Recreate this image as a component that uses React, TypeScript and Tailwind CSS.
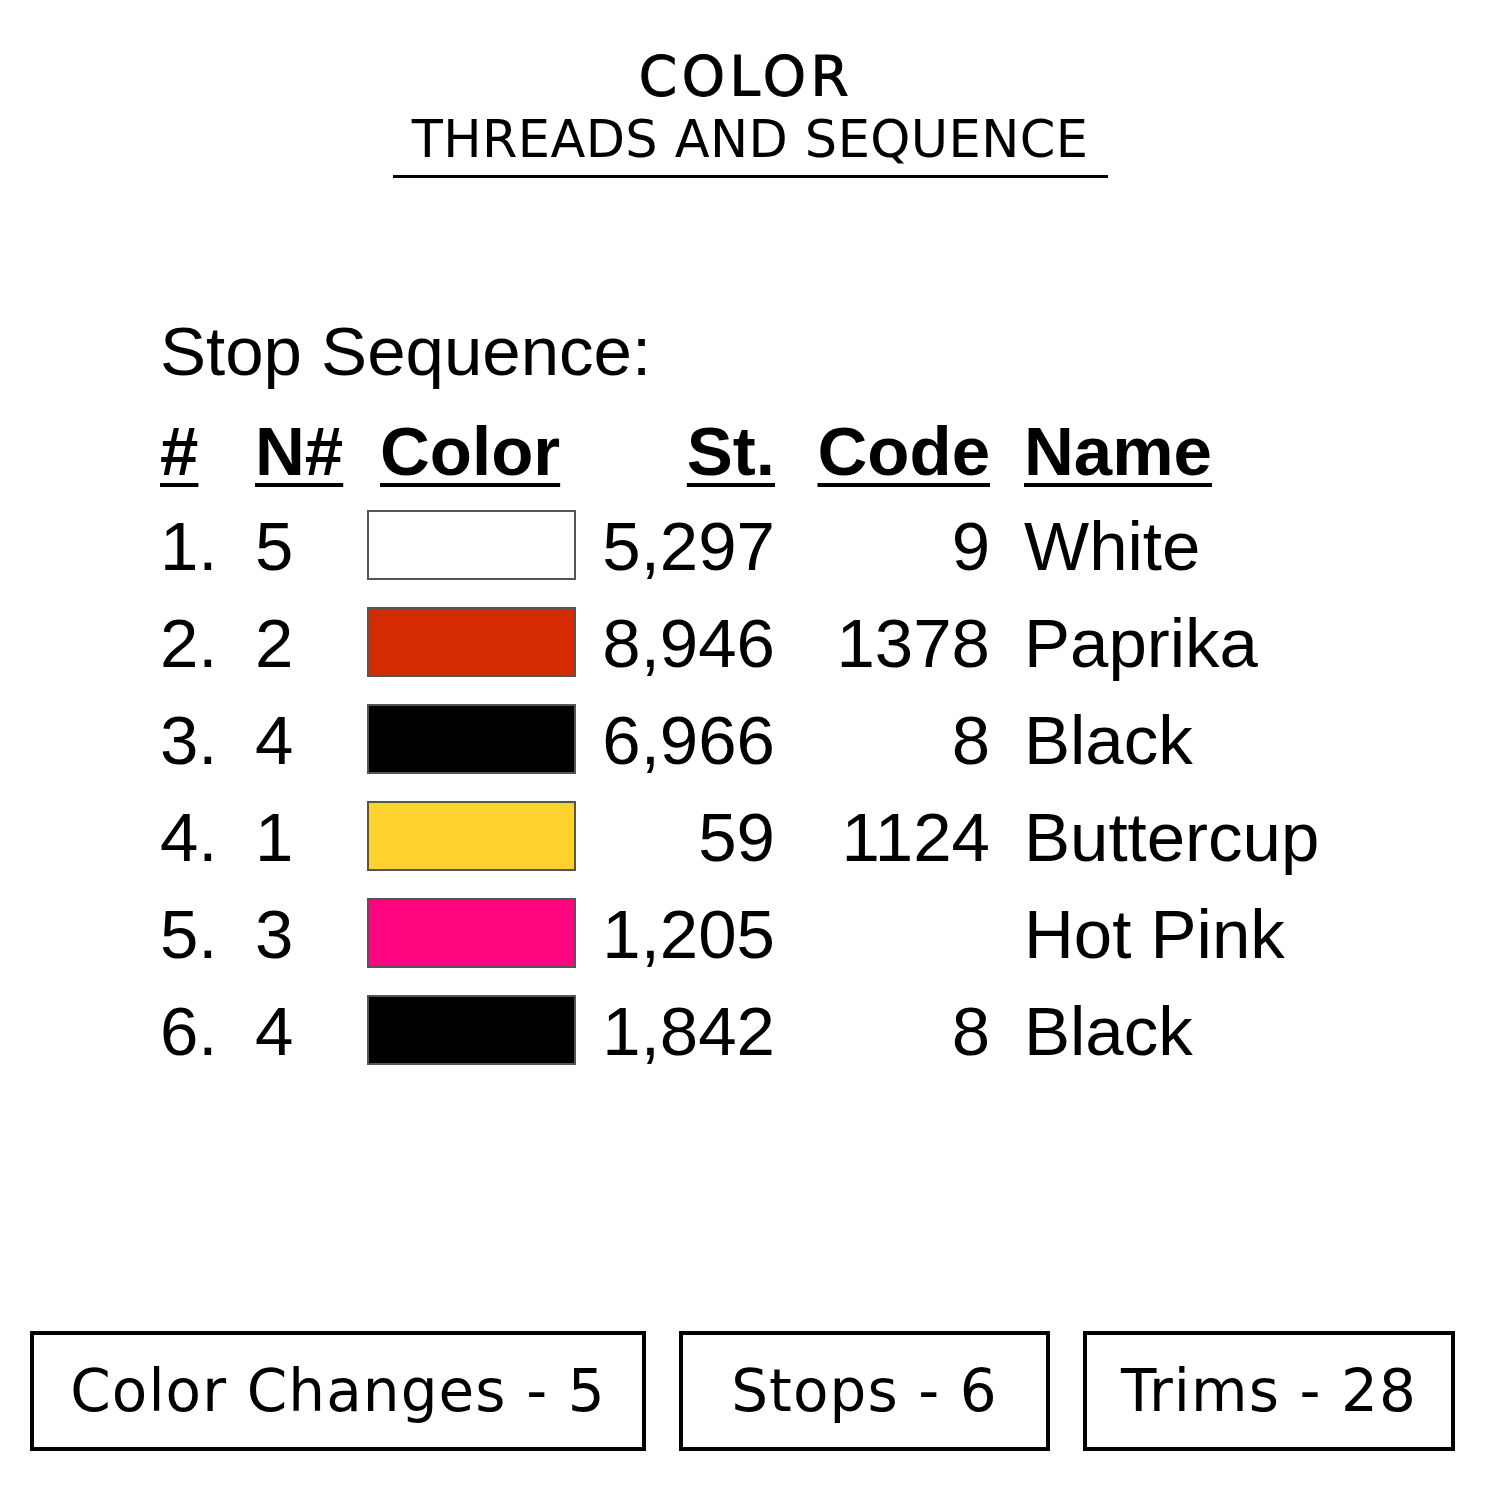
import React from "react";

const rows = [
  { n: "1.", nn: "5", color: "#ffffff", st: "5,297", code: "9", name: "White" },
  { n: "2.", nn: "2", color: "#d42c00", st: "8,946", code: "1378", name: "Paprika" },
  { n: "3.", nn: "4", color: "#000000", st: "6,966", code: "8", name: "Black" },
  { n: "4.", nn: "1", color: "#fdd22f", st: "59", code: "1124", name: "Buttercup" },
  { n: "5.", nn: "3", color: "#ff0580", st: "1,205", code: "", name: "Hot Pink" },
  { n: "6.", nn: "4", color: "#000000", st: "1,842", code: "8", name: "Black" },
];

const head = "font-bold underline decoration-[4px] underline-offset-[8px]";

export default function App() {
  return (
    <div className="w-[1500px] h-[1500px] bg-white text-black flex flex-col">
      <div className="pt-[51px] flex flex-col items-center" style={{ fontFamily: '"DejaVu Sans", sans-serif' }}>
        <div className="text-[55px] leading-[50px] font-normal tracking-[4.5px] pr-[8px] [-webkit-text-stroke:1px_black]">COLOR</div>
        <div className="mt-[14px] text-[51px] leading-[50px] font-normal tracking-[0.4px]">THREADS AND SEQUENCE</div>
        <div className="mt-[10px] w-[715px] border-b-[3px] border-black"></div>
      </div>

      <div className="mt-[125px] pl-[160px]" style={{ fontFamily: '"Liberation Sans", Arial, sans-serif' }}>
        <div className="text-[69px] leading-[97px] mb-[6px]">Stop Sequence:</div>
        <div className="grid grid-cols-[95px_112px_209px_199px_215px_auto] grid-rows-[92px] auto-rows-[97px] text-[69px] leading-[97px]">
          <div className="leading-[92px]"><span className={head}>#</span></div>
          <div className="leading-[92px]"><span className={head}>N#</span></div>
          <div className="leading-[92px] pl-[13px]"><span className={head}>Color</span></div>
          <div className="leading-[92px] text-right"><span className={head}>St.</span></div>
          <div className="leading-[92px] text-right"><span className={head}>Code</span></div>
          <div className="leading-[92px] pl-[34px]"><span className={head}>Name</span></div>
          {rows.map((r, i) => (
            <React.Fragment key={i}>
              <div>{r.n}</div>
              <div>{r.nn}</div>
              <div className="flex items-center">
                <div
                  className="w-[209px] h-[70px] border-2 border-[#555555] mt-[-4px]"
                  style={{ backgroundColor: r.color }}
                ></div>
              </div>
              <div className="text-right">{r.st}</div>
              <div className="text-right">{r.code}</div>
              <div className="pl-[34px]">{r.name}</div>
            </React.Fragment>
          ))}
        </div>
      </div>

      <div
        className="mt-auto mb-[49px] px-[30px] flex gap-[33px] text-[58px] tracking-[1.1px]"
        style={{ fontFamily: '"DejaVu Sans", sans-serif' }}
      >
        <div className="w-[616px] h-[120px] border-4 border-black flex items-center justify-center">Color Changes - 5</div>
        <div className="w-[371px] h-[120px] border-4 border-black flex items-center justify-center">Stops - 6</div>
        <div className="w-[372px] h-[120px] border-4 border-black flex items-center justify-center">Trims - 28</div>
      </div>
    </div>
  );
}
